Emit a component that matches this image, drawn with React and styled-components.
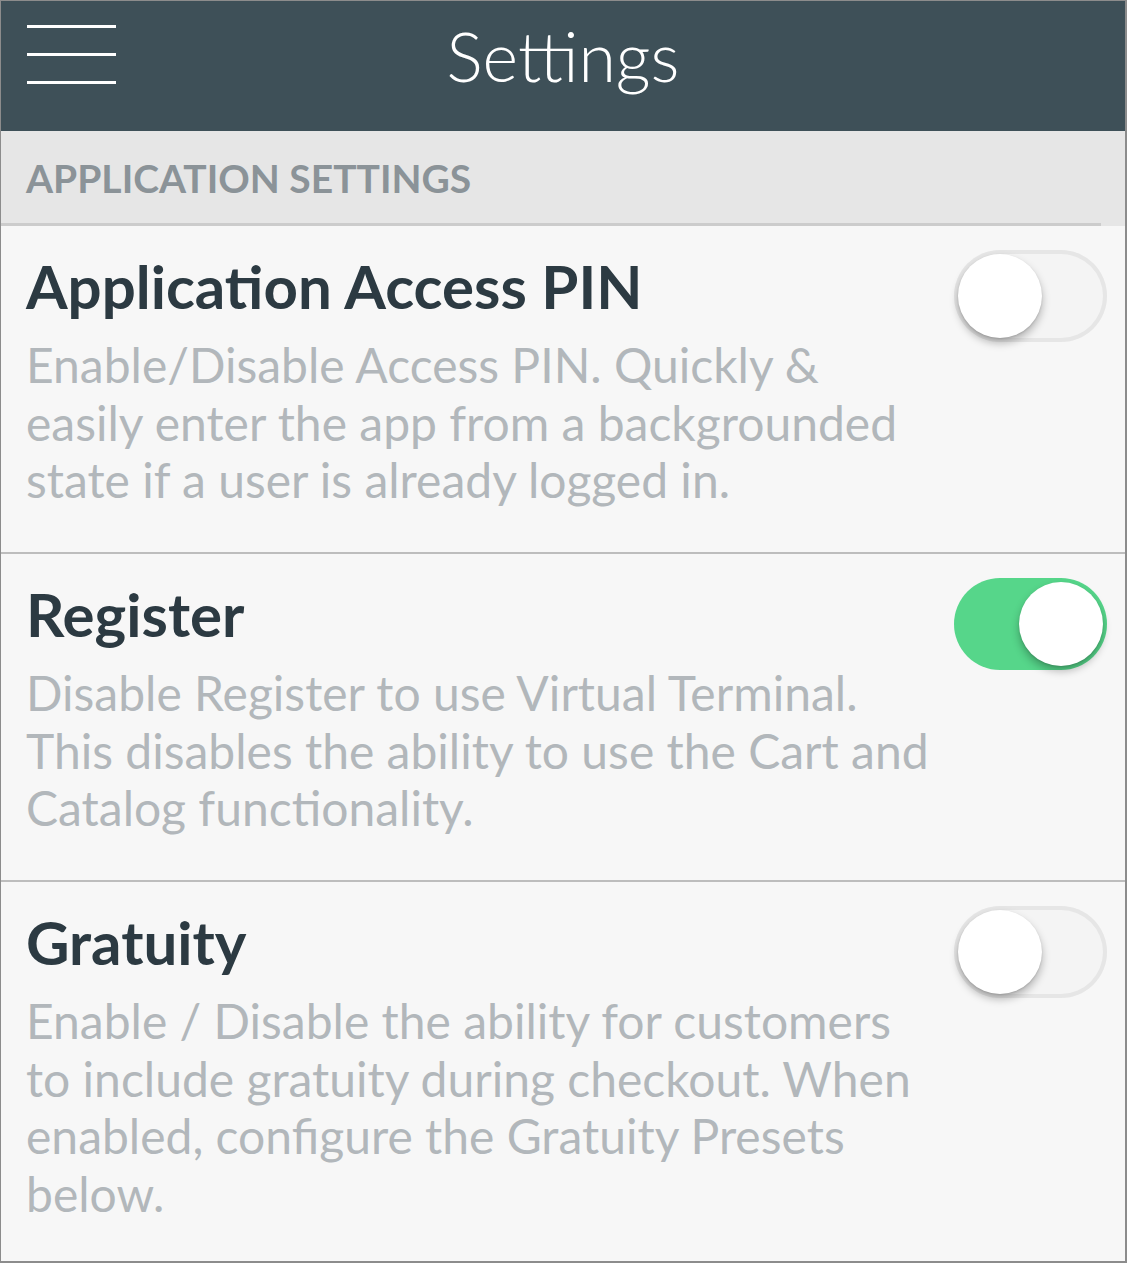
import React, { useState } from "react";
import styled, { createGlobalStyle } from "styled-components";

const GlobalStyle = createGlobalStyle`
  html, body {
    margin: 0;
    padding: 0;
    background: #ffffff;
  }

  body {
    font-family: Lato, "Noto Sans", "Liberation Sans", sans-serif;
  }

  * {
    box-sizing: border-box;
  }
`;

const settings = [
  {
    id: "pin",
    title: "Application Access PIN",
    desc: [
      "Enable/Disable Access PIN. Quickly &",
      "easily enter the app from a backgrounded",
      "state if a user is already logged in.",
    ],
    on: false,
  },
  {
    id: "register",
    title: "Register",
    desc: [
      "Disable Register to use Virtual Terminal.",
      "This disables the ability to use the Cart and",
      "Catalog functionality.",
    ],
    on: true,
  },
  {
    id: "gratuity",
    title: "Gratuity",
    desc: [
      "Enable / Disable the ability for customers",
      "to include gratuity during checkout. When",
      "enabled, configure the Gratuity Presets",
      "below.",
    ],
    on: false,
  },
];

function Toggle({ on, onClick }) {
  return (
    <StTrack $on={on} onClick={onClick} role="switch" aria-checked={on}>
      <StKnob />
    </StTrack>
  );
}

export default function App() {
  const [values, setValues] = useState(
    settings.reduce((acc, s) => ({ ...acc, [s.id]: s.on }), {})
  );

  const flip = (id) => setValues((v) => ({ ...v, [id]: !v[id] }));

  return (
    <>
      <GlobalStyle />
      <StScreen>
        <StTopBar>
          <StMenuButton aria-label="menu">
            <span />
            <span />
            <span />
          </StMenuButton>
          <StTitle>Settings</StTitle>
          <div />
        </StTopBar>

        <StSectionHead>
          <StSectionLabel>APPLICATION SETTINGS</StSectionLabel>
          <StSectionRule />
        </StSectionHead>

        {settings.map((s, i) => (
          <StRow key={s.id} $last={i === settings.length - 1}>
            <StRowText>
              <StRowTitle>{s.title}</StRowTitle>
              <StRowDesc>
                {s.desc.map((line) => (
                  <span key={line}>{line}</span>
                ))}
              </StRowDesc>
            </StRowText>
            <Toggle on={values[s.id]} onClick={() => flip(s.id)} />
          </StRow>
        ))}
      </StScreen>
    </>
  );
}

const StScreen = styled.div`
  width: 1127px;
  height: 1263px;
  overflow: hidden;
  display: flex;
  flex-direction: column;
  background-color: #f7f7f7;
  border: 1px solid #8c8c8c;
  border-right-width: 2px;
  border-bottom-width: 2px;
`;

const StTopBar = styled.header`
  height: 130px;
  flex-shrink: 0;
  display: grid;
  grid-template-columns: 1fr auto 1fr;
  align-items: start;
  padding-left: 26px;
  background-color: #3e5058;
`;

const StMenuButton = styled.button`
  width: 89px;
  margin-top: 24px;
  padding: 0;
  border: none;
  background: none;
  display: flex;
  flex-direction: column;
  gap: 25px;
  cursor: pointer;

  & > span {
    display: block;
    height: 3px;
    background-color: #ffffff;
  }
`;

const StTitle = styled.h1`
  margin: 0;
  padding-top: 15px;
  font-size: 68px;
  font-weight: 300;
  line-height: 80px;
  color: #ffffff;
  transform: translateX(-13px);
`;

const StSectionHead = styled.div`
  flex-shrink: 0;
  display: flex;
  flex-direction: column;
  background-color: #e6e6e6;
`;

const StSectionLabel = styled.h2`
  margin: 0;
  height: 92px;
  padding: 22px 0 0 25px;
  font-size: 39px;
  font-weight: 700;
  line-height: 50px;
  color: #8b9398;
`;

const StSectionRule = styled.div`
  height: 3px;
  margin-right: 24px;
  background-color: #cccccc;
`;

const StRow = styled.section`
  flex-shrink: 0;
  display: flex;
  align-items: flex-start;
  justify-content: space-between;
  padding: 24px 18px 0 25px;
  height: ${(p) => (p.$last ? "auto" : "328px")};
  flex-grow: ${(p) => (p.$last ? 1 : 0)};
  border-bottom: ${(p) => (p.$last ? "none" : "2px solid #bdbdbd")};
  background-color: #f7f7f7;
`;

const StRowText = styled.div`
  display: flex;
  flex-direction: column;
  gap: 14px;
`;

const StRowTitle = styled.h3`
  margin: 0;
  font-size: 60px;
  font-weight: 700;
  line-height: 72px;
  color: #2c3a42;
`;

const StRowDesc = styled.p`
  margin: 0;
  display: flex;
  flex-direction: column;
  font-size: 48px;
  font-weight: 400;
  line-height: 57.5px;
  color: #b2b7bb;
  white-space: nowrap;
`;

const StTrack = styled.div`
  flex-shrink: 0;
  width: 153px;
  height: 92px;
  border-radius: 46px;
  display: flex;
  align-items: center;
  justify-content: ${(p) => (p.$on ? "flex-end" : "flex-start")};
  padding: 0 4px;
  cursor: pointer;
  background-color: ${(p) => (p.$on ? "#56d68a" : "#f4f4f4")};
  box-shadow: ${(p) => (p.$on ? "none" : "inset 0 0 0 4px #e6e6e6")};
`;

const StKnob = styled.div`
  width: 84px;
  height: 84px;
  border-radius: 50%;
  background-color: #ffffff;
  box-shadow: 0 5px 9px rgba(0, 0, 0, 0.28), 0 1px 2px rgba(0, 0, 0, 0.12);
`;
